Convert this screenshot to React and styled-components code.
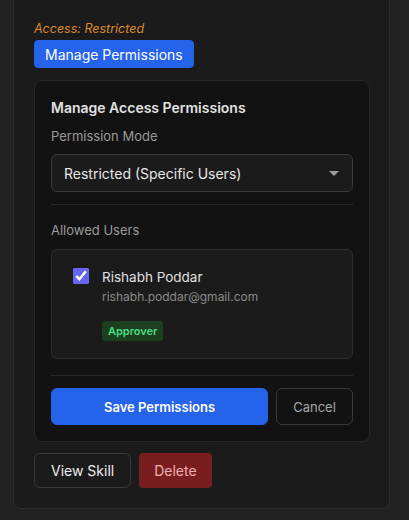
import React from 'react'
import styled, { createGlobalStyle } from "styled-components"

const GlobalStyle = createGlobalStyle`
    body {
        margin: 0;
        background-color: #212121;
        font-family: Inter, "Noto Sans", sans-serif;
        overflow: hidden;
    }
`

const Page = styled.div`
    padding: 0 19px 0 13px;
    height: 520px;
    box-sizing: border-box;
`

const Card = styled.div`
    margin-top: -11px;
    border: 1px solid #2e2e2e;
    border-radius: 8px;
    background-color: #1b1b1b;
    padding: 30px 19px 20px 20px;
    display: flex;
    flex-direction: column;
    align-items: flex-start;
`

const AccessNote = styled.div`
    font-size: 12.5px;
    line-height: 18px;
    font-style: italic;
    color: #dd8a28;
`

const Button = styled.button`
    font-family: inherit;
    border-radius: ${props => props.$radius || 4}px;
    cursor: pointer;
    font-size: ${props => props.$size || 14}px;
    font-weight: ${props => props.$weight || 400};
    height: ${props => props.$height || 34}px;
    padding: 0 ${props => props.$pad || 12}px;
    border: 1px solid ${props =>
        props.$variant === "primary" ? "#2563eb" :
        props.$variant === "danger" ? "#7a1d1f" : "#3a3a3a"};
    background-color: ${props =>
        props.$variant === "primary" ? "#2563eb" :
        props.$variant === "danger" ? "#7a1d1f" : "transparent"};
    color: ${props =>
        props.$variant === "primary" ? "#ffffff" :
        props.$variant === "danger" ? "#eeb0b0" :
        props.$muted ? "#a8a8a8" : "#eeeeee"};
`

const Panel = styled.div`
    margin-top: 12px;
    align-self: stretch;
    border: 1px solid #272727;
    border-radius: 8px;
    background-color: #121212;
    padding: 16px;
    display: flex;
    flex-direction: column;
`

const PanelTitle = styled.h3`
    margin: 0;
    font-size: 14px;
    line-height: 22px;
    font-weight: 600;
    color: #e2e2e2;
`

const Label = styled.div`
    margin-top: ${props => props.$top || 8}px;
    font-size: 13px;
    line-height: 18px;
    color: #9a9a9a;
`

const SelectWrap = styled.div`
    position: relative;
    margin-top: 9px;
`

const Select = styled.select`
    appearance: none;
    width: 100%;
    height: 38px;
    font-family: inherit;
    font-size: 14px;
    color: #e8e8e8;
    background-color: #1b1b1b;
    border: 1px solid #3a3a3a;
    border-radius: 6px;
    padding: 0 12px;
    outline: none;
`

const Caret = styled.svg`
    position: absolute;
    right: 14px;
    top: 17px;
    pointer-events: none;
`

const Divider = styled.div`
    height: 1px;
    background-color: #2a2a2a;
    margin-top: ${props => props.$top || 13}px;
`

const UserCard = styled.div`
    margin-top: 10px;
    border: 1px solid #2e2e2e;
    border-radius: 6px;
    background-color: #1b1b1b;
    padding: 17px 16px 17px 21px;
    display: flex;
    flex-direction: row;
    align-items: flex-start;
    gap: 13px;
`

const Check = styled.input`
    margin: 1px 0 0 0;
    width: 16px;
    height: 16px;
    accent-color: #6366f1;
`

const UserInfo = styled.div`
    display: flex;
    flex-direction: column;
    align-items: flex-start;
`

const UserName = styled.div`
    font-size: 13.5px;
    line-height: 20px;
    color: #e0e0e0;
`

const UserEmail = styled.div`
    font-size: 12px;
    line-height: 19px;
    color: #8a8a8a;
`

const Badge = styled.span`
    margin-top: 15px;
    height: 20px;
    line-height: 20px;
    padding: 0 6px;
    border-radius: 3px;
    background-color: #1c3f20;
    color: #4ade80;
    font-size: 11px;
    font-weight: 600;
`

const ActionRow = styled.div`
    margin-top: ${props => props.$top || 12}px;
    display: flex;
    flex-direction: row;
    gap: 8px;
`

export default function App() {
    return (
        <Page>
            <GlobalStyle />
            <Card>
                <AccessNote>Access: Restricted</AccessNote>
                <Button $variant="primary" $height={28} $pad={10} style={{ marginTop: 2 }}>Manage Permissions</Button>
                <Panel>
                    <PanelTitle>Manage Access Permissions</PanelTitle>
                    <Label $top={8}>Permission Mode</Label>
                    <SelectWrap>
                        <Select defaultValue="restricted">
                            <option value="restricted">Restricted (Specific Users)</option>
                            <option value="public">Public</option>
                            <option value="private">Private</option>
                        </Select>
                        <Caret width="10" height="5" viewBox="0 0 10 5">
                            <path d="M0 0 L10 0 L5 5 Z" fill="#9a9a9a" />
                        </Caret>
                    </SelectWrap>
                    <Divider $top={12} />
                    <Label $top={16}>Allowed Users</Label>
                    <UserCard>
                        <Check type="checkbox" defaultChecked />
                        <UserInfo>
                            <UserName>Rishabh Poddar</UserName>
                            <UserEmail>rishabh.poddar@gmail.com</UserEmail>
                            <Badge>Approver</Badge>
                        </UserInfo>
                    </UserCard>
                    <Divider $top={16} />
                    <ActionRow $top={12}>
                        <Button $variant="primary" $height={37} $size={13} $weight={600} $radius={6} style={{ flex: 1 }}>Save Permissions</Button>
                        <Button $height={37} $size={13} $radius={6} $muted $pad={0} style={{ width: 77 }}>Cancel</Button>
                    </ActionRow>
                </Panel>
                <ActionRow $top={11}>
                    <Button $height={35} $radius={6} $pad={16}>View Skill</Button>
                    <Button $variant="danger" $height={35} $pad={14}>Delete</Button>
                </ActionRow>
            </Card>
        </Page>
    )
}
